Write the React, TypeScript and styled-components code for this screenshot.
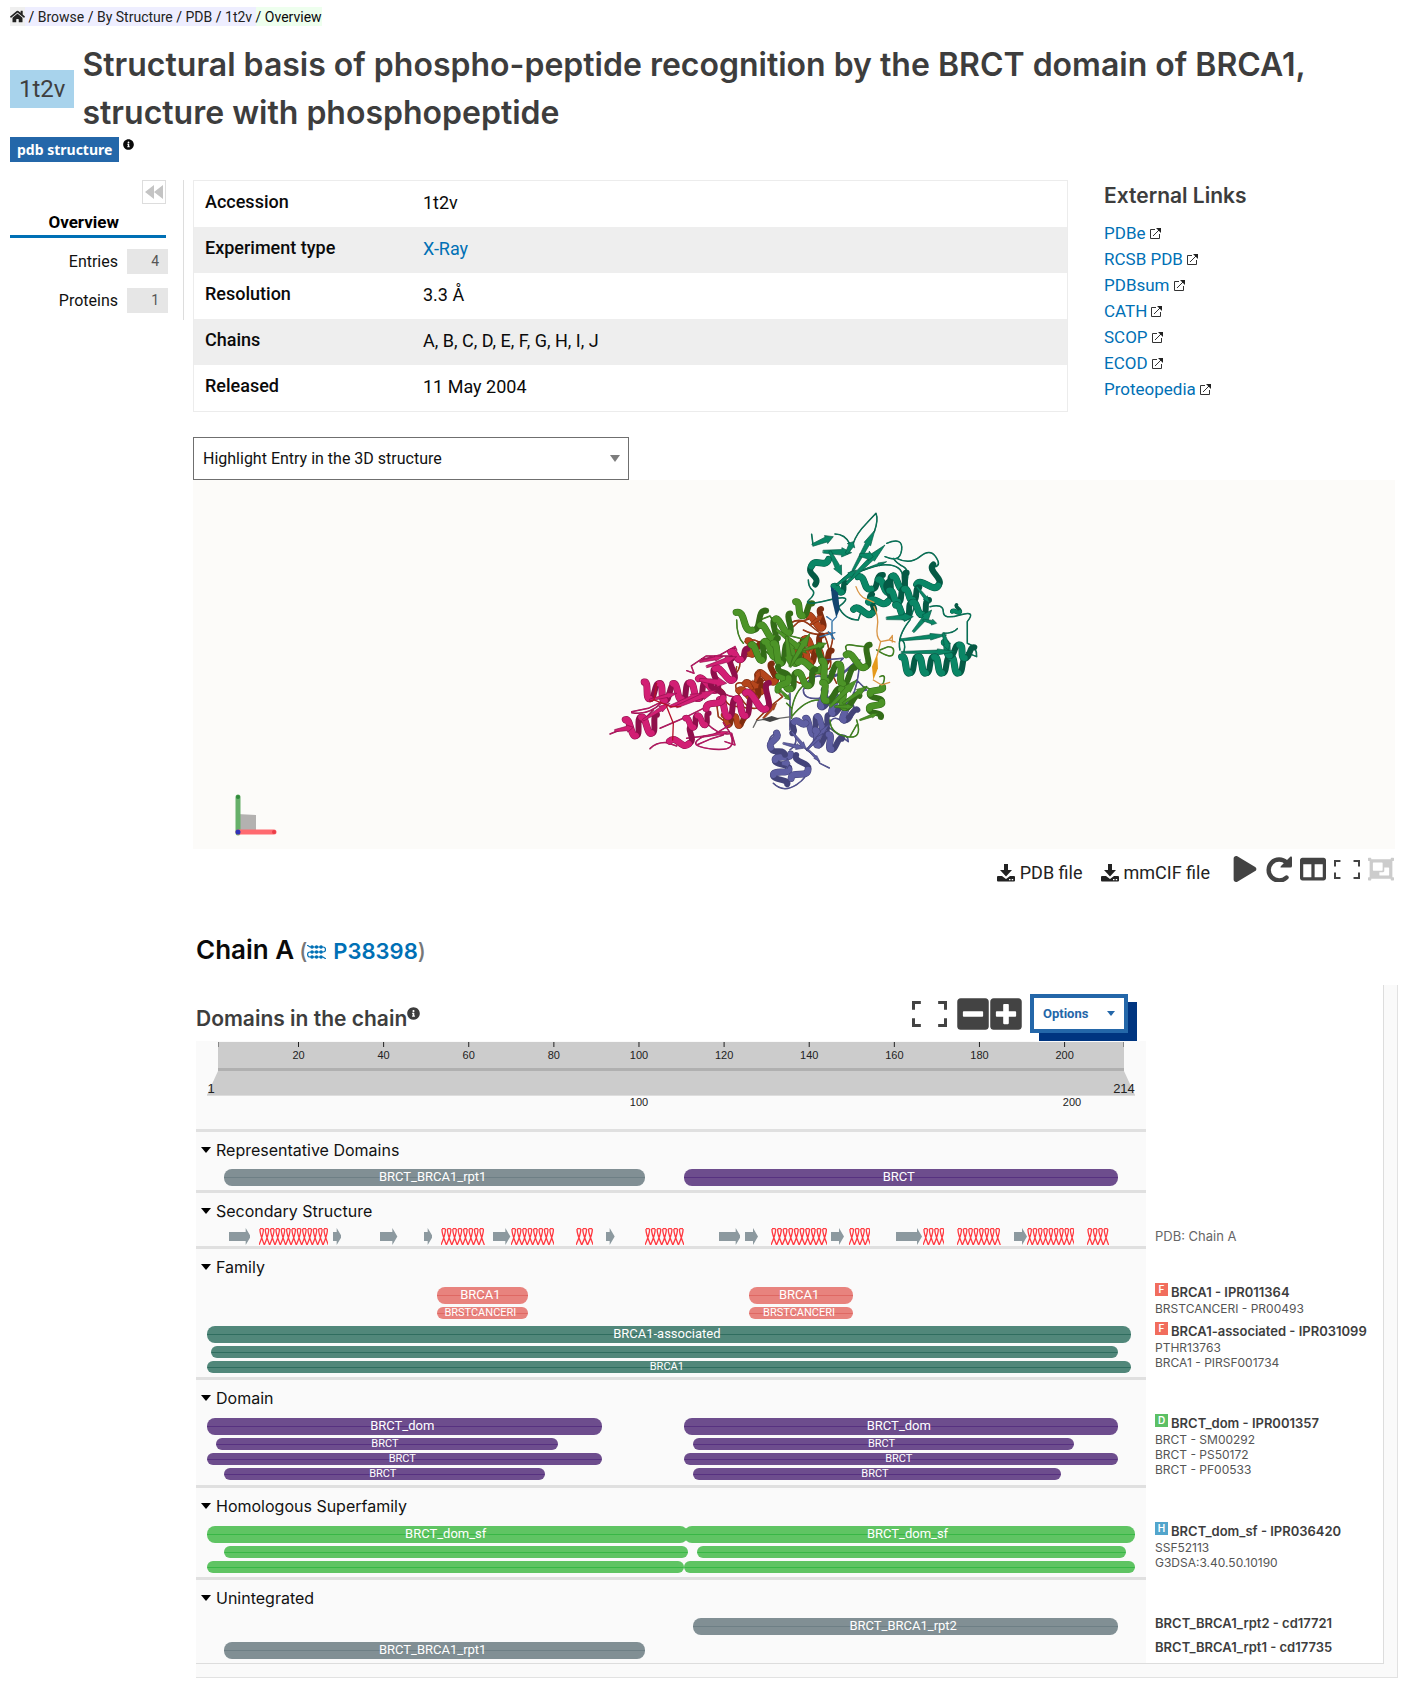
import React from "react";
import styled, { createGlobalStyle } from "styled-components";
import { FaHome, FaInfoCircle, FaPlay, FaColumns, FaObjectGroup, FaMinusSquare, FaPlusSquare } from "react-icons/fa";

const TEXT = `Roboto, "Noto Sans", sans-serif`;
const HEAD = `Inter, "Liberation Sans", sans-serif`;

const GlobalStyle = createGlobalStyle`
  *, *::before, *::after { box-sizing: border-box; }
  body { margin: 0; background: #fff; color: #0a0a0a; font: 16px/24px ${TEXT}; }
  a { color: #0070b5; text-decoration: none; }
  button { font: inherit; cursor: pointer; }
`;

const Page = styled.div`padding: 7px 0 12px 10px;`;

/* ---------- header ---------- */

const Breadcrumb = styled.nav`
  display: flex;
  width: max-content;
  height: 19px;
  font-size: 14px;
  line-height: 20px;
  white-space: pre;
  a { color: #222; }
  svg { display: block; margin-top: 2px; }
`;
const Crumbs = styled.span<{ $bg: string }>`background: ${(p) => p.$bg};`;
const TitleRow = styled.div`
  display: flex;
  align-items: center;
  gap: 8px;
  margin-top: 15px;
  padding-right: 29px;
`;
const AccessionTag = styled.span`
  flex: none;
  padding: 0 9px;
  background: #a8d3ec;
  color: #3f3f3f;
  font-size: 24px;
  line-height: 38px;
`;
const Title = styled.h1`
  margin: 0;
  color: #3d3d3d;
  font: 600 32px/48px ${HEAD};
`;
const TypeRow = styled.div`
  display: flex;
  gap: 4px;
  font-size: 11px;
  svg { margin-top: 2px; }
`;
const TypeTag = styled.span`
  padding: 0 7px;
  background: #2467a9;
  color: #fff;
  font: 700 14px/25px "Noto Sans", sans-serif;
`;

/* ---------- page columns ---------- */

const Columns = styled.div`
  display: grid;
  grid-template-columns: 174px minmax(0, 1fr);
  gap: 9px;
  align-items: start;
  margin-top: 18px;
`;
const Side = styled.nav`
  display: flex;
  flex-direction: column;
  height: 140px;
  padding-right: 15px;
  border-right: 1px solid #ddd;
`;
const Collapse = styled.button`
  align-self: flex-end;
  display: grid;
  place-items: center;
  width: 24px;
  height: 24px;
  margin-right: 2px;
  padding: 0;
  border: 1px solid #ddd;
  background: #fff;
`;
const ActiveItem = styled.a`
  margin: 6px 2px 0 0;
  padding-right: 47px;
  border-bottom: 3px solid #0070b5;
  color: #000;
  font-size: 17px;
  font-weight: 700;
  line-height: 25px;
  text-align: right;
`;
const SideItem = styled.a`
  display: flex;
  justify-content: flex-end;
  gap: 9px;
  margin-top: 14px;
  color: #111;
  line-height: 25px;
  &:first-of-type { margin-top: 11px; }
`;
const SideList = styled.div`
  display: flex;
  flex-direction: column;
`;
const Count = styled.span`
  width: 41px;
  padding-right: 9px;
  background: #e6e6e6;
  color: #555;
  font-size: 14px;
  text-align: right;
`;
const Main = styled.main`min-width: 0;`;
const InfoRow = styled.div`
  display: flex;
  align-items: flex-start;
  gap: 36px;
  padding-right: 29px;
`;
const InfoTable = styled.table`
  flex: 1;
  border: 1px solid #ececec;
  border-collapse: separate;
  border-spacing: 0;
  font-size: 18px;
  tr:nth-child(even) { background: #eee; }
  th, td { height: 46px; padding: 0 10px 2px; text-align: left; vertical-align: middle; }
  th { width: 219px; padding: 0 11px 4px; font-weight: 500; }
`;
const Links = styled.section`
  width: 291px;
  font-size: 17px;
  line-height: 26px;
  h2 { margin: 0 0 8px; color: #3d3d3d; font: 600 21px/32px ${HEAD}; }
  ul { margin: 0; padding: 0; list-style: none; }
  li { display: flex; align-items: center; gap: 4px; }
`;

/* ---------- 3D viewer ---------- */

const SelectBox = styled.div`
  position: relative;
  width: 436px;
  max-width: 100%;
  margin-top: 25px;
  &::after {
    content: "";
    position: absolute;
    right: 9px;
    top: 18px;
    border: 5px solid transparent;
    border-top: 7px solid #7d7d7d;
    border-bottom: 0;
    pointer-events: none;
  }
`;
const Select = styled.select`
  display: block;
  width: 100%;
  height: 43px;
  padding: 0 9px;
  border: 1px solid #6f6f6f;
  border-radius: 0;
  background: #fff;
  color: #111;
  font: 16px ${TEXT};
  appearance: none;
`;
const Viewer = styled.div`
  position: relative;
  height: 369px;
  margin-right: 29px;
  background: #fcfbf9;
`;
const Scene = styled.svg`
  display: block;
  width: 100%;
  height: 100%;
`;
const AxesGizmo = styled.svg`
  position: absolute;
  left: 38px;
  bottom: 9px;
`;
const Toolbar = styled.div`
  display: flex;
  justify-content: flex-end;
  align-items: center;
  gap: 8px;
  height: 40px;
  margin-right: 30px;
  font-size: 18px;
`;
const Downloads = styled.div`
  display: flex;
  gap: 18px;
  margin-right: 14px;
  padding-top: 8px;
`;
const Download = styled.a`
  display: flex;
  align-items: center;
  gap: 5px;
  color: #222;
`;
const IconButton = styled.button<{ $muted?: boolean }>`
  display: grid;
  place-items: center;
  padding: 0;
  border: 0;
  background: none;
  color: ${(p) => (p.$muted ? "#ccc" : "#434343")};
`;

/* ---------- chain ---------- */

const Chain = styled.section`margin: 43px 26px 0 3px;`;
const ChainTitle = styled.h2`
  display: flex;
  align-items: baseline;
  gap: 5px;
  margin: 0;
  font: 600 26px/36px ${HEAD};
  small { color: #777; font-size: 22px; font-weight: 500; }
  a { font-weight: 600; }
  svg { margin-right: 7px; }
`;
const Panel = styled.div`
  margin-top: 16px;
  padding: 0 13px 13px 0;
  border: solid #e2e2e2;
  border-width: 0 1px 1px 0;
  background: #fafafa;
`;
const PanelBody = styled.div`
  border: solid #ddd;
  border-width: 0 1px 1px 0;
  background: #fff;
`;
const Row = styled.div`
  display: grid;
  grid-template-columns: minmax(0, 1fr) 237px;
`;
const PanelHead = styled.div`
  display: flex;
  justify-content: space-between;
  align-items: flex-end;
  height: 56px;
  padding: 0 18px 8px 0;
`;
const PanelTitle = styled.h3`
  display: flex;
  align-items: flex-start;
  margin: 0;
  color: #3d3d3d;
  font: 600 21px/28px ${HEAD};
  svg { margin-top: 2px; font-size: 13px; }
`;
const Controls = styled.div`
  display: flex;
  align-items: center;
  height: 39px;
  gap: 10px;
`;
const Zoom = styled.div`
  display: flex;
  gap: 1px;
  margin-right: -2px;
  svg { width: 32px; height: 36px; }
`;
const Options = styled.button`
  display: flex;
  align-items: center;
  justify-content: space-between;
  width: 98px;
  height: 39px;
  padding: 0 9px;
  border: 4px solid #2467a9;
  background: #fff;
  box-shadow: 9px 8px 0 #003580;
  color: #2467a9;
  font-size: 13px;
  font-weight: 700;
  &::after { content: ""; border: 4px solid transparent; border-top: 5px solid #2467a9; border-bottom: 0; }
`;
const RulerSvg = styled.svg`
  display: block;
  width: 100%;
  background: #fafafa;
  font-family: "Liberation Sans", sans-serif;
`;
const Divider = styled.div`
  height: 3px;
  background: #e0e0e0;
`;
const SectionHead = styled.button`
  display: flex;
  align-items: center;
  gap: 5px;
  height: 35px;
  padding: 0 5px;
  border: 0;
  background: #fafafa;
  color: #111;
  font: 400 16px ${HEAD};
  text-align: left;
  &::before { content: ""; border: 5px solid transparent; border-top: 6px solid #000; border-bottom: 0; }
`;
const TrackCell = styled.div<{ $top: number; $bottom: number }>`
  display: grid;
  gap: 3px;
  align-content: start;
  padding: ${(p) => p.$top}px 11px ${(p) => p.$bottom}px;
  background: #fafafa;
`;
const Track = styled.div<{ $small?: boolean }>`
  display: grid;
  grid-template-columns: repeat(214, minmax(0, 1fr));
  grid-template-rows: ${(p) => (p.$small ? 12 : 17)}px;
  font-size: ${(p) => (p.$small ? 11 : 13)}px;
  line-height: ${(p) => (p.$small ? 11 : 15)}px;
`;
const Bar = styled.div<{ $from: number; $to: number; $fill: string; $line: string }>`
  grid-row: 1;
  grid-column: ${(p) => p.$from} / ${(p) => p.$to + 1};
  padding-right: 4px;
  border-radius: 8px;
  background: linear-gradient(${(p) => p.$line}, ${(p) => p.$line}) center / 100% 1px no-repeat ${(p) => p.$fill};
  color: #fff;
  text-align: center;
  white-space: nowrap;
`;
const Piece = styled.svg<{ $from: number; $to: number }>`
  display: block;
  grid-row: 1;
  grid-column: ${(p) => p.$from} / ${(p) => p.$to + 1};
  width: 100%;
  height: 17px;
`;
const LabelCell = styled.div<{ $top: number }>`
  margin-top: -4px;
  padding: ${(p) => p.$top}px 0 0 9px;
  color: #444;
  font: 12px/15px ${HEAD};
  white-space: nowrap;
`;
const LabelHead = styled.a`
  display: flex;
  gap: 3px;
  color: #3d3d3d;
  font-size: 13px;
  font-weight: 600;
  line-height: 18px;
`;
const LabelSub = styled.a`
  display: block;
  color: #555;
`;
const ChainLabel = styled.div`
  padding-left: 9px;
  color: #666;
  font: 13px/17px ${HEAD};
`;
const Kind = styled.span<{ $bg: string }>`
  width: 13px;
  height: 13px;
  background: ${(p) => p.$bg};
  color: #fff;
  font-size: 10px;
  line-height: 13px;
  text-align: center;
`;

/* ---------- small drawings ---------- */

const ExternalIcon = () => (
  <svg width="11" height="11" viewBox="0 0 11 11" fill="none" stroke="#333">
    <path d="M5 1.5H.5v9h9V6M3 8l6-6" />
    <path d="M6 0h5v5z" fill="#222" stroke="none" />
  </svg>
);
const DownloadIcon = () => (
  <svg width="18" height="18" viewBox="0 0 18 18" fill="#222">
    <path d="M7 0h4v6h4l-6 6.5L3 6h4z" />
    <path d="M1 12h4l4 3 4-3h4q1 0 1 1v3.5q0 1-1 1H1q-1 0-1-1V13q0-1 1-1z" />
    <path d="M12 15h1.5v1.3H12zM14.7 15h1.5v1.3h-1.5z" fill="#fff" />
  </svg>
);
const ResetIcon = () => (
  <svg width="26" height="26" viewBox="0 0 26 26" fill="none">
    <path d="M20.500 21.500A10.500 10.500 0 1 1 20.500 6.500" stroke="#434343" strokeWidth="4.400" strokeLinecap="round" />
    <path d="M24.500 .5q1.500-.5 1.500 1V10q0 1.500-1.500 1.500H15.500q-1.800 0-.5-1.500z" fill="#434343" />
  </svg>
);
const Corners = ({ w, h, s }: { w: number; h: number; s: number }) => {
  const i = s / 2;
  const l = h * 0.34;
  return (
    <svg width={w} height={h} fill="none" stroke="#434343" strokeWidth={s}>
      <path d={`M${l} ${i}H${i}V${l}M${w - l} ${i}H${w - i}V${l}M${l} ${h - i}H${i}V${h - l}M${w - l} ${h - i}H${w - i}V${h - l}`} />
    </svg>
  );
};
const ProteinIcon = () => (
  <svg width="19" height="14" viewBox="0 0 19 14" fill="none" stroke="#0070b5" strokeWidth="1.2">
    <path d="M0 0l3 2h13q2.500 0 2.500 2.500T16 7H3Q.6 7 .6 9.500T3 12h13l3 2" />
    <path d="M5 2h.1M9.500 2h.1M14 2h.1M5 7h.1M9.500 7h.1M14 7h.1M5 12h.1M9.500 12h.1M14 12h.1" strokeWidth="3.400" strokeLinecap="round" />
  </svg>
);

/* ---------- molecule ---------- */

type Tone = { light: string; dark: string };
type Helix = [number, number, number, number, number, number];
type Strand = [number, number, number, number, number];
type Subunit = { tone: Tone; coils: string; helices: Helix[]; strands: Strand[] };

const SUBUNITS: Subunit[] = [
  {
    tone: { light: "#b5461c", dark: "#7e2c0f" },
    coils:
      "M465 455q20-12 40 0t20 40M600 400q30-20 60 5t40 30 20 60-20 40M610 410l15-14 30-8M430 560q20-20 20-40t40-25M365 590q40 0 40 30t45 30 10 50M380 640l5 40 20 15M440 530l-8 40-12-10M640 420q40 20 70 10t10 50M590 560l40 20 30-20M540 560q-40 30-80 20t-10 40 60 30M500 690l40-40 38-30-20-20M640 495q0 40 30 50M660 570l20-20 50 10 10 20",
    helices: [[470, 470, 510, 480, 1, 18], [480, 600, 560, 540, 2, 24], [600, 480, 700, 460, 2, 24], [400, 690, 465, 695, 2, 14], [640, 500, 725, 500, 2, 18], [455, 620, 520, 590, 1, 20], [665, 400, 705, 380, 1, 26]],
    strands: [[520, 685, 560, 640, 14], [490, 590, 510, 540, 20], [485, 575, 505, 595, 30], [660, 405, 700, 375, 18]],
  },
  {
    tone: { light: "#5f5fa3", dark: "#434379" },
    coils:
      "M640 600q20-50 60-40t80-30 20 50-60 30M700 560l60-10 50-40M640 600q0 30 50 25M600 610v110M630 700q-40-20-20 20t-10 60M700 700l75 55q0-20-20-20M650 780q30 20 40 40l28 14M550 880q30 30 70 4t30-60M560 730q-30 10-20 40t50 30M760 640q40-10 30 30t-40 20-40 40M700 510l60-5-40 40M800 570l30 30-40 10",
    helices: [[580, 790, 570, 880, 2, 22], [625, 870, 640, 800, 1, 22], [545, 735, 570, 800, 1, 16], [650, 710, 720, 700, 2, 26], [670, 740, 750, 765, 2, 20], [690, 620, 790, 680, 3, 24], [640, 690, 600, 720, 1, 12]],
    strands: [[580, 760, 640, 775, 18], [605, 725, 650, 780, 16], [650, 780, 720, 700, 14], [650, 780, 700, 730, 14], [650, 775, 690, 815, 12], [700, 600, 720, 640, 16], [575, 820, 600, 820, 32]],
  },
  {
    tone: { light: "#d21f74", dark: "#8f0f4b" },
    coils:
      "M60 732l30-12 30-10M290 542l22 8-8-22 45-30 80 0M330 510l60-15 45-25M420 490l15-20 5 10M180 776q20-20 50-18l30 10M125 665l50-10 60-30M125 668q50 10 90-30M210 715l70-30 60-30M340 740q-40 20-10 30t70 8 20-50l-20-30M350 700q40 40 75 30l10 35-30-10M290 745l80-10 50-30M320 765q40-20 80-30M150 700l40-40M370 590q40 30 60 30",
    helices: [[110, 715, 205, 700, 2, 26], [160, 600, 250, 610, 2, 24], [250, 605, 350, 600, 2, 24], [340, 590, 440, 530, 2, 28], [390, 655, 490, 650, 2, 26], [480, 640, 550, 610, 1, 34], [250, 770, 320, 720, 1, 20], [290, 700, 360, 685, 2, 16], [425, 500, 475, 490, 1, 14], [370, 660, 385, 580, 1, 22]],
    strands: [[160, 690, 240, 640, 20], [180, 630, 260, 610, 18], [240, 650, 340, 610, 24], [350, 530, 440, 500, 22], [330, 515, 400, 500, 16], [75, 722, 130, 712, 22], [260, 650, 380, 600, 24], [340, 740, 420, 725, 12], [330, 570, 410, 580, 30]],
  },
  {
    tone: { light: "#4c9427", dark: "#336c18" },
    coils:
      "M440 390q0 50 20 70M510 390l30-12 20 30M590 640l15 15v30M605 660q10-60 45-80M775 490q-20-30 10-25t40 5M870 480l25-10q20 0 15 20t-50-10M870 560q20-10 10 20t-60 10M720 690q0 40 50 50t30-50M570 600q10-50-10-80t-40-40M605 680q40-50 80-50M650 450l-80-20M730 640q60-10 100-50M780 740l20-35",
    helices: [[440, 395, 530, 390, 1, 28], [520, 430, 610, 395, 2, 26], [615, 355, 665, 360, 1, 20], [490, 490, 570, 470, 2, 26], [550, 490, 640, 490, 2, 30], [640, 540, 710, 490, 1, 28], [570, 580, 680, 560, 2, 22], [690, 540, 790, 560, 2, 28], [780, 520, 850, 490, 1, 28], [860, 590, 855, 680, 2, 18], [690, 600, 800, 640, 2, 24], [580, 600, 580, 530, 1, 16]],
    strands: [[560, 420, 650, 490, 26], [600, 530, 660, 430, 26], [590, 440, 600, 530, 26], [640, 480, 710, 460, 20], [720, 650, 800, 570, 26], [760, 640, 830, 590, 22], [735, 650, 790, 650, 18], [570, 600, 600, 630, 16], [810, 690, 865, 670, 14]],
  },
  {
    tone: { light: "#0a8766", dark: "#055a45" },
    coils:
      "M665 133l4 30M735 132q30 0 45 30M790 160q10-30 40-60l28-30q8 20-5 55M890 160q50-20 45 20t-50 20M920 205q40 20 70-5t47 0 0 30M655 270q0 20 12 30t-10 30 60 0 30 20M745 350q20 40 60 40l10-30M940 270q0-40-40-45t-90 20M950 280q10-40-10-50t-30-25M1020 350q40-10 40 15t50 10 22 20v65q30 10 28 40l-30-12M930 480q-10-40 30-90l20-60M930 445q20 10 12 40M1060 430q30 0 42-14M790 240q-60 50-65 60",
    helices: [[700, 200, 660, 275, 1, 18], [805, 280, 880, 275, 1, 20], [870, 290, 955, 270, 2, 22], [805, 375, 860, 330, 1, 22], [850, 350, 910, 290, 1, 20], [1000, 300, 1050, 240, 1, 26], [900, 320, 990, 310, 2, 18], [920, 365, 1020, 350, 2, 20], [935, 525, 1130, 525, 4, 24], [1060, 475, 1150, 490, 2, 18], [735, 300, 770, 290, 1, 12], [1095, 370, 1108, 350, 1, 10]],
    strands: [[668, 165, 730, 140, 26], [700, 185, 785, 188, 28], [720, 185, 755, 255, 26], [770, 190, 790, 155, 26], [790, 240, 855, 120, 22], [770, 280, 885, 165, 24], [810, 195, 850, 200, 30], [820, 240, 890, 215, 10], [740, 285, 800, 240, 18], [890, 385, 970, 380, 26], [970, 425, 1025, 360, 24], [930, 450, 1070, 435, 20], [935, 487, 1100, 485, 18], [1060, 430, 1075, 480, 24], [980, 290, 1020, 340, 16], [1000, 390, 1040, 400, 18]],
  },
];

const helixPaths = ([x1, y1, x2, y2, turns, r]: Helix) => {
  const len = Math.hypot(x2 - x1, y2 - y1) || 1;
  const ux = (x2 - x1) / len;
  const uy = (y2 - y1) / len;
  const n = turns * 2;
  const step = len / n;
  const at = (k: number, side: number) => [x1 + ux * step * k - uy * r * side, y1 + uy * step * k + ux * r * side];
  const front: string[] = [];
  const back: string[] = [];
  for (let k = 0; k < n; k++) {
    const s = k % 2 ? 1 : -1;
    (k % 2 ? back : front).push(`M${at(k, s)}C${at(k + 0.7, s * 1.2)} ${at(k + 0.3, -s * 1.2)} ${at(k + 1, -s)}`);
  }
  return { back: back.join(""), front: front.join(""), width: Math.min(18, step * 0.9) };
};
const strandPath = ([x1, y1, x2, y2, w]: Strand) => {
  const len = Math.hypot(x2 - x1, y2 - y1) || 1;
  const px = (-(y2 - y1) / len) * w * 0.5;
  const py = ((x2 - x1) / len) * w * 0.5;
  const mx = x1 + (x2 - x1) * 0.65;
  const my = y1 + (y2 - y1) * 0.65;
  return `M${x1 + px * 0.3} ${y1 + py * 0.3}L${mx + px * 0.6} ${my + py * 0.6}L${mx + px} ${my + py}L${x2} ${y2}L${mx - px} ${my - py}L${mx - px * 0.6} ${my - py * 0.6}L${x1 - px * 0.3} ${y1 - py * 0.3}Z`;
};

const Molecule = () => (
  <Scene viewBox="0 0 1202 369" role="img" aria-label="3D structure of 1t2v">
    <g transform="translate(397 10) scale(.3333)" fill="none" strokeLinejoin="round" strokeLinecap="round">
      {SUBUNITS.map(({ tone, coils, helices, strands }) => (
        <g key={tone.light}>
          <path d={coils} stroke={tone.dark} strokeWidth="4.500" />
          <path d={coils} stroke={tone.light} strokeWidth="2" />
          {helices.map((h, i) => {
            const { back, front, width } = helixPaths(h);
            return (
              <g key={i}>
                <path d={back} stroke={tone.dark} strokeWidth={width} />
                <path d={front} stroke={tone.dark} strokeWidth={width + 3} />
                <path d={front} stroke={tone.light} strokeWidth={width} />
              </g>
            );
          })}
          {strands.map((s, i) => (
            <path key={i} d={strandPath(s)} fill={tone.light} stroke={tone.dark} strokeWidth="2" />
          ))}
        </g>
      ))}
      <path d="M798 290q10 30 30 37l24 10M852 350q15 30 10 60t10 45l-10 40M872 455l25-5 10-12M897 450l18 6M907 436v20M850 570l25 15 24-8" stroke="#d99545" strokeWidth="4" />
      <path d="M862 490l-16 40 4 40 14-35z" fill="#e59a1c" />
      <path d="M722 288l22 20 5 50-10 25-12-50z" fill="#12446f" />
      <path d="M740 380l-14 15v50M690 440l45-12M715 425l18 22M710 380l14 10" stroke="#2e6fa5" strokeWidth="4" />
      <path d="M490 712l10-20 30-5M560 686l45-6" stroke="#666" strokeWidth="4" />
      <path d="M515 688l30-10 25 8-30 10z" fill="#444" />
      <path d="M200 580l-8 50-12 5M230 650l20 50-2 50M192 630l50 20 30 0" stroke="#b5102a" strokeWidth="4" />
    </g>
  </Scene>
);

/* ---------- data ---------- */

type Colour = [string, string];
const GREY: Colour = ["#818f94", "#6e7f85"];
const PURPLE: Colour = ["#6d4d8d", "#573180"];
const CORAL: Colour = ["#e8837e", "#df6863"];
const TEAL: Colour = ["#51877a", "#2f6d5f"];
const GREEN: Colour = ["#5fc463", "#38b746"];

type Line = { small?: boolean; spans: [number, number][]; text?: string; colour: Colour };
type Label = { kind?: [string, string]; head: string; subs?: string[] };
type Group = { lines: Line[]; label?: Label };
type SectionData = { name: string; groups: Group[]; end: number };

const FAMILY: [string, string] = ["F", "#f16d5d"];

const SECTIONS: SectionData[] = [
  {
    name: "Family",
    end: 4,
    groups: [
      {
        label: { kind: FAMILY, head: "BRCA1 - IPR011364", subs: ["BRSTCANCERI - PR00493"] },
        lines: [
          { spans: [[54, 74], [126, 149]], text: "BRCA1", colour: CORAL },
          { small: true, spans: [[54, 74], [126, 149]], text: "BRSTCANCERI", colour: CORAL },
        ],
      },
      {
        label: { kind: FAMILY, head: "BRCA1-associated - IPR031099", subs: ["PTHR13763", "BRCA1 - PIRSF001734"] },
        lines: [
          { spans: [[1, 213]], text: "BRCA1-associated", colour: TEAL },
          { small: true, spans: [[2, 210]], colour: TEAL },
          { small: true, spans: [[1, 213]], text: "BRCA1", colour: TEAL },
        ],
      },
    ],
  },
  {
    name: "Domain",
    end: 5,
    groups: [
      {
        label: { kind: ["D", "#5cc065"], head: "BRCT_dom - IPR001357", subs: ["BRCT - SM00292", "BRCT - PS50172", "BRCT - PF00533"] },
        lines: [
          { spans: [[1, 91], [111, 210]], text: "BRCT_dom", colour: PURPLE },
          { small: true, spans: [[3, 81], [113, 200]], text: "BRCT", colour: PURPLE },
          { small: true, spans: [[1, 91], [111, 210]], text: "BRCT", colour: PURPLE },
          { small: true, spans: [[5, 78], [113, 197]], text: "BRCT", colour: PURPLE },
        ],
      },
    ],
  },
  {
    name: "Homologous Superfamily",
    end: 4,
    groups: [
      {
        label: { kind: ["H", "#52a5cc"], head: "BRCT_dom_sf - IPR036420", subs: ["SSF52113", "G3DSA:3.40.50.10190"] },
        lines: [
          { spans: [[1, 111], [111, 214]], text: "BRCT_dom_sf", colour: GREEN },
          { small: true, spans: [[5, 111], [114, 212]], colour: GREEN },
          { small: true, spans: [[1, 110], [111, 214]], colour: GREEN },
        ],
      },
    ],
  },
  {
    name: "Unintegrated",
    end: 4,
    groups: [
      { label: { head: "BRCT_BRCA1_rpt2 - cd17721" }, lines: [{ spans: [[113, 210]], text: "BRCT_BRCA1_rpt2", colour: GREY }] },
      { label: { head: "BRCT_BRCA1_rpt1 - cd17735" }, lines: [{ spans: [[5, 101]], text: "BRCT_BRCA1_rpt1", colour: GREY }] },
    ],
  },
];

const SHEETS = [[6, 10], [30, 31], [41, 44], [51, 52], [67, 70], [93, 94], [119, 123], [125, 127], [145, 147], [160, 165], [187, 189]];
const COILS = [[13, 28], [55, 64], [71, 80], [86, 89], [102, 110], [131, 143], [149, 153], [166, 170], [174, 183], [190, 200], [204, 208]];

const FACTS: [string, React.ReactNode][] = [
  ["Accession", "1t2v"],
  ["Experiment type", <a href="#xray">X-Ray</a>],
  ["Resolution", "3.3 Å"],
  ["Chains", "A, B, C, D, E, F, G, H, I, J"],
  ["Released", "11 May 2004"],
];
const LINKS = ["PDBe", "RCSB PDB", "PDBsum", "CATH", "SCOP", "ECOD", "Proteopedia"];

/* ---------- tracks ---------- */

const SheetArrow = ({ from, to }: { from: number; to: number }) => {
  const w = (to - from + 1) * 4.336;
  return (
    <Piece $from={from} $to={to} viewBox={`0 0 ${w} 17`} preserveAspectRatio="none">
      <path d={`M0 4H${w - 5}V0L${w} 8.500L${w - 5} 17V13H0Z`} fill="#8c999f" />
    </Piece>
  );
};
const HelixCoil = ({ from, to }: { from: number; to: number }) => {
  const n = Math.round(((to - from + 1) * 4.336) / 5.44);
  const d = Array.from({ length: n }, (_, i) => {
    const x = i * 5.44;
    return `M${x} 17C${x + 2} 12 ${x + 5} 5 ${x + 4.4} 1M${x + 1} 1C${x + 0.5} 5 ${x + 3.5} 12 ${x + 5.4} 17M${x + 1} .6H${x + 4.4}`;
  }).join("");
  return (
    <Piece $from={from} $to={to} viewBox={`0 0 ${n * 5.44} 17`} preserveAspectRatio="none">
      <path d={d} fill="none" stroke="#ff3b42" strokeWidth="1.300" />
    </Piece>
  );
};

const Ruler = () => (
  <RulerSvg viewBox="0 0 950 88" role="img" aria-label="Residues 1 to 214">
    <path d="M22 1h906v29l11 24H11l11-24z" fill="#ccc" />
    <path d="M11 54.500h928" stroke="#ddd" />
    <path d="M22 28.500h906" stroke="#b0b0b0" strokeWidth="3" />
    <path d="M22.500 1v5M927.500 1v5" stroke="#888" />
    <g fontSize="11" fill="#222" textAnchor="middle">
      {[20, 40, 60, 80, 100, 120, 140, 160, 180, 200].map((n) => {
        const x = 102.5 + (n - 20) * 4.256;
        return (
          <g key={n}>
            <path d={`M${x} 1v5`} stroke="#222" />
            <text x={x} y="18">{n}</text>
          </g>
        );
      })}
      <text x="443" y="65">100</text>
      <text x="876" y="65">200</text>
      <text x="15" y="52" fontSize="13">1</text>
      <text x="928" y="52" fontSize="13">214</text>
    </g>
  </RulerSvg>
);

const Lines = ({ lines }: { lines: Line[] }) => (
  <>
    {lines.map((l, i) => (
      <Track key={i} $small={l.small}>
        {l.spans.map(([a, b]) => (
          <Bar key={a} $from={a} $to={b} $fill={l.colour[0]} $line={l.colour[1]}>{l.text}</Bar>
        ))}
      </Track>
    ))}
  </>
);

const SectionRows = ({ name, groups, end }: SectionData) => (
  <>
    <Row><SectionHead type="button">{name}</SectionHead></Row>
    {groups.map(({ lines, label }, i) => {
      const top = i ? 7 : 3;
      return (
        <Row key={i}>
          <TrackCell $top={top} $bottom={i === groups.length - 1 ? end : 0}><Lines lines={lines} /></TrackCell>
          {label && (
            <LabelCell $top={top}>
              <LabelHead href="#entry">
                {label.kind && <Kind $bg={label.kind[1]}>{label.kind[0]}</Kind>}
                {label.head}
              </LabelHead>
              {label.subs?.map((s) => <LabelSub key={s} href="#signature">{s}</LabelSub>)}
            </LabelCell>
          )}
        </Row>
      );
    })}
  </>
);

export default function App() {
  return (
    <Page>
      <GlobalStyle />
      <Breadcrumb aria-label="Breadcrumb">
        <Crumbs $bg="#efefef"><a href="#home" aria-label="Home"><FaHome size={15} /></a></Crumbs>
        <Crumbs $bg="#eeeeff">
          {" / "}<a href="#browse">Browse</a>{" / "}<a href="#structure">By Structure</a>{" / "}<a href="#pdb">PDB</a>{" / "}<a href="#1t2v">1t2v</a>{" "}
        </Crumbs>
        <Crumbs $bg="#eeffee">{"/ Overview"}</Crumbs>
      </Breadcrumb>
      <TitleRow>
        <AccessionTag>1t2v</AccessionTag>
        <Title>Structural basis of phospho-peptide recognition by the BRCT domain of BRCA1, structure with phosphopeptide</Title>
      </TitleRow>
      <TypeRow>
        <TypeTag>pdb structure</TypeTag>
        <FaInfoCircle />
      </TypeRow>

      <Columns>
        <Side aria-label="Entry sections">
          <Collapse type="button" aria-label="Collapse menu">
            <svg width="18" height="14" fill="#c4c4c4"><path d="M9 0v14L0 7zM18 0v14L9 7z" /></svg>
          </Collapse>
          <ActiveItem href="#overview">Overview</ActiveItem>
          <SideList>
            <SideItem href="#entries">Entries<Count>4</Count></SideItem>
            <SideItem href="#proteins">Proteins<Count>1</Count></SideItem>
          </SideList>
        </Side>

        <Main>
          <InfoRow>
            <InfoTable>
              <tbody>
                {FACTS.map(([k, v]) => <tr key={k}><th scope="row">{k}</th><td>{v}</td></tr>)}
              </tbody>
            </InfoTable>
            <Links>
              <h2>External Links</h2>
              <ul>{LINKS.map((l) => <li key={l}><a href={`#${l}`}>{l}</a><ExternalIcon /></li>)}</ul>
            </Links>
          </InfoRow>

          <SelectBox>
            <Select aria-label="Highlight Entry in the 3D structure">
              <option>Highlight Entry in the 3D structure</option>
            </Select>
          </SelectBox>
          <Viewer>
            <Molecule />
            <AxesGizmo width="48" height="48" viewBox="0 0 48 48">
              <path d="M6 22l19 1v17H6z" fill="#b3b1b0" />
              <path d="M7 5v36" stroke="#66b06a" strokeWidth="5" strokeLinecap="round" />
              <path d="M7 40h36" stroke="#ff6a70" strokeWidth="5" strokeLinecap="round" />
              <circle cx="7" cy="5" r="2" fill="#318a3c" />
              <circle cx="43" cy="40" r="2" fill="#ea3e48" />
              <circle cx="7" cy="40" r="2.500" fill="#2f33b8" />
            </AxesGizmo>
          </Viewer>
          <Toolbar>
            <Downloads>
              <Download href="#pdb-file"><DownloadIcon />PDB file</Download>
              <Download href="#cif-file"><DownloadIcon />mmCIF file</Download>
            </Downloads>
            <IconButton type="button" aria-label="Play"><FaPlay size={26} /></IconButton>
            <IconButton type="button" aria-label="Reset"><ResetIcon /></IconButton>
            <IconButton type="button" aria-label="Split view"><FaColumns size={26} /></IconButton>
            <IconButton type="button" aria-label="Full screen"><Corners w={26} h={19} s={2} /></IconButton>
            <IconButton type="button" aria-label="Picture in picture" $muted><FaObjectGroup size={26} /></IconButton>
          </Toolbar>

          <Chain>
            <ChainTitle>
              Chain A <small>(<a href="#P38398"><ProteinIcon />P38398</a>)</small>
            </ChainTitle>
            <Panel>
              <PanelBody>
                <Row>
                  <PanelHead>
                    <PanelTitle>Domains in the chain<FaInfoCircle /></PanelTitle>
                    <Controls>
                      <IconButton type="button" aria-label="Full screen"><Corners w={35} h={26} s={3} /></IconButton>
                      <Zoom>
                        <IconButton type="button" aria-label="Zoom out"><FaMinusSquare /></IconButton>
                        <IconButton type="button" aria-label="Zoom in"><FaPlusSquare /></IconButton>
                      </Zoom>
                      <Options type="button">Options</Options>
                    </Controls>
                  </PanelHead>
                </Row>
                <Row><Ruler /></Row>
                <Row><Divider /></Row>
                <Row><SectionHead type="button">Representative Domains</SectionHead></Row>
                <Row>
                  <TrackCell $top={2} $bottom={4}>
                    <Track>
                      <Bar $from={5} $to={101} $fill={GREY[0]} $line={GREY[1]}>BRCT_BRCA1_rpt1</Bar>
                      <Bar $from={111} $to={210} $fill={PURPLE[0]} $line={PURPLE[1]}>BRCT</Bar>
                    </Track>
                  </TrackCell>
                </Row>
                <Row><Divider /></Row>
                <Row><SectionHead type="button">Secondary Structure</SectionHead></Row>
                <Row>
                  <TrackCell $top={0} $bottom={1}>
                    <Track>
                      {SHEETS.map(([a, b]) => <SheetArrow key={a} from={a} to={b} />)}
                      {COILS.map(([a, b]) => <HelixCoil key={a} from={a} to={b} />)}
                    </Track>
                  </TrackCell>
                  <ChainLabel>PDB: Chain A</ChainLabel>
                </Row>
                <Row><Divider /></Row>
                {SECTIONS.map((s, i) => (
                  <React.Fragment key={s.name}>
                    {i > 0 && <Row><Divider /></Row>}
                    <SectionRows {...s} />
                  </React.Fragment>
                ))}
              </PanelBody>
            </Panel>
          </Chain>
        </Main>
      </Columns>
    </Page>
  );
}
